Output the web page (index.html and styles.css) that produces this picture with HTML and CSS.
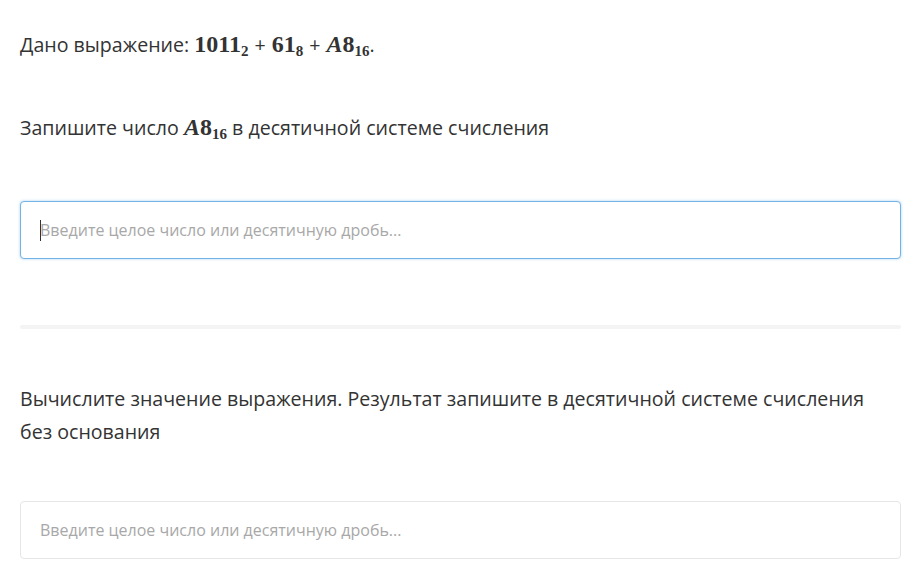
FILE: index.html
```html
<!DOCTYPE html>
<html lang="ru">
<head>
<meta charset="utf-8">
<link rel="stylesheet" href="styles.css">
</head>
<body>
<main class="page">
  <p class="text intro">Дано выражение: <span class="math"><b>1011</b><sub>2</sub><span class="op">+</span><b>61</b><sub>8</sub><span class="op">+</span><b><i>A</i>8</b><sub>16</sub></span>.</p>
  <p class="text q1">Запишите число <span class="math"><b><i>A</i>8</b><sub>16</sub></span> в десятичной системе счисления</p>
  <div class="field focused"><span class="caret"></span><span class="ph">Введите целое число или десятичную дробь...</span></div>
  <div class="divider"></div>
  <p class="text q2">Вычислите значение выражения. Результат запишите в десятичной системе счисления без основания</p>
  <div class="field"><span class="ph">Введите целое число или десятичную дробь...</span></div>
</main>
</body>
</html>
```
FILE: styles.css
```css
* { box-sizing: border-box; }
html, body { margin: 0; padding: 0; background: #fff; }
body { font-family: "Open Sans", "Liberation Sans", sans-serif; color: #333; }
.page { padding: 0 21px 0 20px; display: flex; flex-direction: column; }
.text { margin: 0; font-size: 19.6px; line-height: 33px; }
.intro { margin-top: 28px; }
.q1 { margin-top: 50px; }
.math { font-family: "Liberation Serif", "DejaVu Serif", serif; font-size: 24px; }
.math b { font-weight: 700; }
.math sub { font-size: 15px; font-weight: 700; vertical-align: -4px; line-height: 0; }
.math .op { font-family: "Open Sans", sans-serif; font-size: 19.6px; margin: 0 6px; }
.field {
  display: flex; align-items: center; height: 58px; padding: 0 19px;
  border: 1px solid #e6e6e6; border-radius: 4px; background: #fff;
  font-size: 16px;
}
.field.focused { margin-top: 57px; border-color: #74b3e6; box-shadow: 0 0 3px rgba(116,179,230,0.6); }
.caret { width: 1px; height: 21px; background: #333; margin-right: -1px; }
.ph { color: #a8a8a8; }
.divider { height: 4px; background: #f4f4f4; margin-top: 66px; border-radius: 2px; }
.q2 { margin-top: 53px; }
.q2 + .field { margin-top: 53px; }
```
